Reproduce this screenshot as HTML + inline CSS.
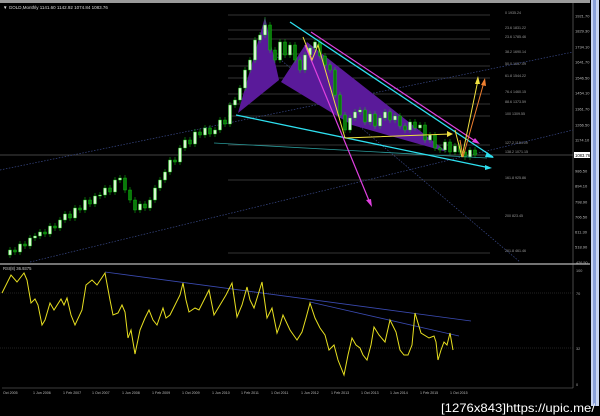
<!DOCTYPE html>
<html><head><meta charset="utf-8"><style>
html,body{margin:0;padding:0;background:#000;width:600px;height:416px;overflow:hidden}
svg{display:block}
text{font-family:"Liberation Sans",sans-serif}
.bu{fill:#d8f8d0;stroke:#1c1;stroke-width:0.4}
.be{fill:#0a7a0a;stroke:#1c1;stroke-width:0.4}
</style></head><body>
<svg width="600" height="416" viewBox="0 0 600 416" xmlns="http://www.w3.org/2000/svg">
<rect width="600" height="416" fill="#000"/>
<rect x="0" y="0" width="590" height="3" fill="#9a9a9a"/>
<rect x="591" y="0" width="8" height="406" fill="#c8d4f0"/>
<rect x="593" y="0" width="3" height="406" fill="#8aa0d8"/>
<line x1="573" y1="3" x2="573" y2="388" stroke="#777" stroke-width="0.6"/>
<line x1="0" y1="264" x2="590" y2="264" stroke="#999" stroke-width="1.5"/>
<line x1="2" y1="388" x2="573" y2="388" stroke="#777" stroke-width="0.6"/>
<text x="3" y="9" font-size="4.5" fill="#ddd">▼ GOLD,Monthly  1141.60  1142.92  1074.84  1083.76</text>
<g stroke="#666" stroke-width="0.5">
<line x1="228" y1="15" x2="490" y2="15"/><line x1="228" y1="30" x2="490" y2="30"/><line x1="228" y1="39" x2="490" y2="39"/><line x1="228" y1="54" x2="490" y2="54"/><line x1="228" y1="66" x2="490" y2="66"/><line x1="228" y1="78" x2="490" y2="78"/><line x1="228" y1="94" x2="490" y2="94"/><line x1="228" y1="104" x2="490" y2="104"/><line x1="228" y1="116" x2="490" y2="116"/><line x1="228" y1="145" x2="490" y2="145"/><line x1="228" y1="180" x2="490" y2="180"/><line x1="228" y1="218" x2="490" y2="218"/><line x1="228" y1="253" x2="490" y2="253"/>
</g>
<g font-size="3.6" fill="#999">
<text x="505" y="14">0 1935.24</text><text x="505" y="29">23.6 1831.22</text><text x="505" y="38">23.6 1785.46</text><text x="505" y="53">38.2 1690.14</text><text x="505" y="65">50.0 1637.09</text><text x="505" y="77">61.8 1544.22</text><text x="505" y="93">76.4 1460.15</text><text x="505" y="103">88.6 1373.59</text><text x="505" y="115">100 1309.55</text><text x="505" y="144">127.2 1184.09</text><text x="505" y="153">138.2 1071.15</text><text x="505" y="179">161.8 925.86</text><text x="505" y="217">200 823.45</text><text x="505" y="252">261.8 461.46</text>
</g>
<line x1="0" y1="155" x2="573" y2="155" stroke="#888" stroke-width="0.6"/>
<g stroke="#3a4a8a" stroke-width="0.7" stroke-dasharray="1.5,1.5" fill="none">
<line x1="0" y1="170" x2="573" y2="52"/>
<line x1="30" y1="262" x2="573" y2="130"/>
<line x1="275" y1="55" x2="520" y2="262"/>
</g>
<polygon points="238,113 265,17 279,80" fill="#5a1a9a"/>
<polygon points="281,82 307,42 447,152 352,125" fill="#5a1a9a"/>
<path fill="none" stroke="#1c1" stroke-width="0.5" d="M10 247V258M15 247V255M20 241V255M25 241V249M30 235V249M35 233V241M40 229V239M45 229V237M50 223V237M55 223V231M60 217V231M65 211V223M70 211V221M75 205V221M80 205V213M85 197V213M90 197V207M95 193V207M100 192V199M105 185V198M110 185V195M115 177V195M120 175V183M125 175V193M130 187V203M135 197V213M140 201V213M145 201V211M150 197V211M155 185V203M160 177V191M165 169V183M170 157V175M175 157V165M180 145V165M185 137V151M190 137V147M195 129V147M200 129V138M205 125V138M210 125V137M215 127V137M220 117V133M225 117V127M230 102V127M235 97V108M240 85V103M245 67V91M250 57V73M255 37V63M260 32V43M265 17V38M270 22V53M275 47V63M280 39V63M285 39V58M290 42V58M295 42V63M300 57V73M305 52V73M310 45V58M315 39V51M320 39V59M325 53V68M330 62V73M335 67V98M340 92V118M345 112V133M350 115V133M355 109V121M360 107V115M365 107V125M370 111V125M375 111V129M380 115V129M385 109V121M390 109V123M395 113V123M400 113V129M405 123V133M410 119V133M415 119V131M420 122V131M425 122V143M430 132V143M435 132V151M440 145V153M445 139V153M450 139V155M455 143V155M460 143V155M465 149V160M470 147V160M475 147V158"/>
<g>
<rect class="bu" x="8.5" y="250" width="3" height="5"/><rect class="be" x="13.5" y="250" width="3" height="2"/><rect class="bu" x="18.5" y="244" width="3" height="8"/><rect class="be" x="23.5" y="244" width="3" height="2"/><rect class="bu" x="28.5" y="238" width="3" height="8"/><rect class="bu" x="33.5" y="236" width="3" height="2"/><rect class="bu" x="38.5" y="232" width="3" height="4"/><rect class="be" x="43.5" y="232" width="3" height="2"/><rect class="bu" x="48.5" y="226" width="3" height="8"/><rect class="be" x="53.5" y="226" width="3" height="2"/><rect class="bu" x="58.5" y="220" width="3" height="8"/><rect class="bu" x="63.5" y="214" width="3" height="6"/><rect class="be" x="68.5" y="214" width="3" height="4"/><rect class="bu" x="73.5" y="208" width="3" height="10"/><rect class="be" x="78.5" y="208" width="3" height="2"/><rect class="bu" x="83.5" y="200" width="3" height="10"/><rect class="be" x="88.5" y="200" width="3" height="4"/><rect class="bu" x="93.5" y="196" width="3" height="8"/><rect class="bu" x="98.5" y="195" width="3" height="1"/><rect class="bu" x="103.5" y="188" width="3" height="7"/><rect class="be" x="108.5" y="188" width="3" height="4"/><rect class="bu" x="113.5" y="180" width="3" height="12"/><rect class="bu" x="118.5" y="178" width="3" height="2"/><rect class="be" x="123.5" y="178" width="3" height="12"/><rect class="be" x="128.5" y="190" width="3" height="10"/><rect class="be" x="133.5" y="200" width="3" height="10"/><rect class="bu" x="138.5" y="204" width="3" height="6"/><rect class="be" x="143.5" y="204" width="3" height="4"/><rect class="bu" x="148.5" y="200" width="3" height="8"/><rect class="bu" x="153.5" y="188" width="3" height="12"/><rect class="bu" x="158.5" y="180" width="3" height="8"/><rect class="bu" x="163.5" y="172" width="3" height="8"/><rect class="bu" x="168.5" y="160" width="3" height="12"/><rect class="be" x="173.5" y="160" width="3" height="2"/><rect class="bu" x="178.5" y="148" width="3" height="14"/><rect class="bu" x="183.5" y="140" width="3" height="8"/><rect class="be" x="188.5" y="140" width="3" height="4"/><rect class="bu" x="193.5" y="132" width="3" height="12"/><rect class="be" x="198.5" y="132" width="3" height="3"/><rect class="bu" x="203.5" y="128" width="3" height="7"/><rect class="be" x="208.5" y="128" width="3" height="6"/><rect class="bu" x="213.5" y="130" width="3" height="4"/><rect class="bu" x="218.5" y="120" width="3" height="10"/><rect class="be" x="223.5" y="120" width="3" height="4"/><rect class="bu" x="228.5" y="105" width="3" height="19"/><rect class="bu" x="233.5" y="100" width="3" height="5"/><rect class="bu" x="238.5" y="88" width="3" height="12"/><rect class="bu" x="243.5" y="70" width="3" height="18"/><rect class="bu" x="248.5" y="60" width="3" height="10"/><rect class="bu" x="253.5" y="40" width="3" height="20"/><rect class="bu" x="258.5" y="35" width="3" height="5"/><rect class="bu" x="263.5" y="25" width="3" height="10"/><rect class="be" x="268.5" y="25" width="3" height="25"/><rect class="be" x="273.5" y="50" width="3" height="10"/><rect class="bu" x="278.5" y="42" width="3" height="18"/><rect class="be" x="283.5" y="42" width="3" height="13"/><rect class="bu" x="288.5" y="45" width="3" height="10"/><rect class="be" x="293.5" y="45" width="3" height="15"/><rect class="be" x="298.5" y="60" width="3" height="10"/><rect class="bu" x="303.5" y="55" width="3" height="15"/><rect class="bu" x="308.5" y="48" width="3" height="7"/><rect class="bu" x="313.5" y="42" width="3" height="6"/><rect class="be" x="318.5" y="42" width="3" height="14"/><rect class="be" x="323.5" y="56" width="3" height="9"/><rect class="be" x="328.5" y="65" width="3" height="5"/><rect class="be" x="333.5" y="70" width="3" height="25"/><rect class="be" x="338.5" y="95" width="3" height="20"/><rect class="be" x="343.5" y="115" width="3" height="15"/><rect class="bu" x="348.5" y="118" width="3" height="12"/><rect class="bu" x="353.5" y="112" width="3" height="6"/><rect class="bu" x="358.5" y="110" width="3" height="2"/><rect class="be" x="363.5" y="110" width="3" height="12"/><rect class="bu" x="368.5" y="114" width="3" height="8"/><rect class="be" x="373.5" y="114" width="3" height="12"/><rect class="bu" x="378.5" y="118" width="3" height="8"/><rect class="bu" x="383.5" y="112" width="3" height="6"/><rect class="be" x="388.5" y="112" width="3" height="8"/><rect class="bu" x="393.5" y="116" width="3" height="4"/><rect class="be" x="398.5" y="116" width="3" height="10"/><rect class="be" x="403.5" y="126" width="3" height="4"/><rect class="bu" x="408.5" y="122" width="3" height="8"/><rect class="be" x="413.5" y="122" width="3" height="6"/><rect class="bu" x="418.5" y="125" width="3" height="3"/><rect class="be" x="423.5" y="125" width="3" height="15"/><rect class="bu" x="428.5" y="135" width="3" height="5"/><rect class="be" x="433.5" y="135" width="3" height="13"/><rect class="be" x="438.5" y="148" width="3" height="2"/><rect class="bu" x="443.5" y="142" width="3" height="8"/><rect class="be" x="448.5" y="142" width="3" height="10"/><rect class="bu" x="453.5" y="146" width="3" height="6"/><rect class="be" x="458.5" y="146" width="3" height="6"/><rect class="be" x="463.5" y="152" width="3" height="5"/><rect class="bu" x="468.5" y="150" width="3" height="7"/><rect class="be" x="473.5" y="150" width="3" height="5"/>
</g>
<line x1="214" y1="143" x2="487" y2="158" stroke="#2a9a9a" stroke-width="0.8"/>
<line x1="290" y1="22" x2="493" y2="157" stroke="#2ee0f0" stroke-width="1.3"/>
<line x1="236" y1="115" x2="490" y2="168" stroke="#2ee0f0" stroke-width="1.3"/>
<line x1="311" y1="32" x2="478" y2="143" stroke="#e040e0" stroke-width="1.2"/>
<line x1="305" y1="45" x2="370" y2="203" stroke="#e040e0" stroke-width="1.2"/>
<polyline points="303,37 312,60 318,45 345,138 450,134" fill="none" stroke="#f0e040" stroke-width="1"/>
<polyline points="455,130 462,157 478,80" fill="none" stroke="#f0e040" stroke-width="1"/>
<polyline points="460,140 463,157 484,82" fill="none" stroke="#f08030" stroke-width="1"/>
<g fill="#f0e040"><polygon points="478,76 475,84 480,84"/><polygon points="453,134 447,131 447,137"/></g>
<polygon points="485,78 481,85 486,86" fill="#f08030"/>
<polygon points="372,207 366,200 371,199" fill="#e040e0"/>
<polygon points="480,144 472,142 475,138" fill="#e040e0"/>
<polygon points="494,158 487,152 485,157" fill="#2ee0f0"/>
<polygon points="492,168 485,165 485,170" fill="#2ee0f0"/>
<g font-size="4" fill="#bbb">
<text x="575" y="17.5">1921.70</text><text x="575" y="32.5">1829.30</text><text x="575" y="48.5">1734.10</text><text x="575" y="63.5">1641.70</text><text x="575" y="79.5">1546.50</text><text x="575" y="94.5">1454.10</text><text x="575" y="110.5">1361.70</text><text x="575" y="126.5">1266.50</text><text x="575" y="141.5">1174.10</text><text x="575" y="172.5">986.50</text><text x="575" y="187.5">894.10</text><text x="575" y="203.5">798.90</text><text x="575" y="218.5">706.50</text><text x="575" y="233.5">611.30</text><text x="575" y="248.5">518.90</text>
</g>
<rect x="574" y="152" width="16" height="6" fill="#fff"/>
<text x="575" y="157" font-size="4.2" fill="#000">1083.76</text>
<text x="3" y="270" font-size="4.2" fill="#ccc">RSI(8) 36.9375</text>
<g stroke="#444" stroke-width="0.5" stroke-dasharray="1,1"><line x1="0" y1="293" x2="573" y2="293"/><line x1="0" y1="348" x2="573" y2="348"/></g>
<g font-size="3.8" fill="#aaa"><text x="576" y="272">100</text><text x="576" y="295">70</text><text x="576" y="350">32</text><text x="576" y="386">0</text><text x="576" y="264">426.50</text></g>
<line x1="105" y1="272" x2="471" y2="321" stroke="#3a4ab0" stroke-width="0.8"/>
<line x1="310" y1="302" x2="459" y2="336" stroke="#3a4ab0" stroke-width="0.8"/>
<polyline fill="none" stroke="#e8e020" stroke-width="1" points="2,293 11,275 17,282 24,273 27,280 31,303 35,299 38,305 42,325 45,320 50,303 54,310 61,299 64,305 67,298 71,315 75,325 82,310 86,285 92,280 97,285 105,273 110,300 113,315 118,313 122,305 125,312 128,338 131,330 135,354 140,330 145,318 149,310 153,320 157,325 163,308 166,318 170,315 175,305 180,295 183,283 186,300 189,312 195,308 199,310 204,300 209,290 214,315 220,305 226,295 232,283 237,317 242,305 247,287 250,300 254,308 258,295 262,282 267,318 272,308 277,333 280,325 283,315 290,330 297,340 302,332 306,318 310,303 315,318 320,328 325,335 329,350 334,345 338,360 344,375 348,355 352,338 356,345 360,348 363,355 367,360 371,345 374,327 379,335 385,342 390,320 396,332 400,350 404,355 408,355 412,345 415,313 421,333 429,338 434,336 436,342 438,360 441,350 444,342 447,345 450,333 453,350"/>
<g font-size="3.6" fill="#bbb">
<text x="3" y="394">Oct 2005</text><text x="33" y="394">1 Jun 2006</text><text x="63" y="394">1 Feb 2007</text><text x="92" y="394">1 Oct 2007</text><text x="122" y="394">1 Jun 2008</text><text x="152" y="394">1 Feb 2009</text><text x="182" y="394">1 Oct 2009</text><text x="212" y="394">1 Jun 2010</text><text x="241" y="394">1 Feb 2011</text><text x="271" y="394">1 Oct 2011</text><text x="301" y="394">1 Jun 2012</text><text x="331" y="394">1 Feb 2013</text><text x="361" y="394">1 Oct 2013</text><text x="390" y="394">1 Jun 2014</text><text x="420" y="394">1 Feb 2015</text><text x="450" y="394">1 Oct 2015</text>
</g>
<text x="441" y="412" font-size="12" fill="#fff" font-family="Liberation Mono, monospace" textLength="154" lengthAdjust="spacingAndGlyphs">[1276x843]https://upic.me/</text>
</svg>
</body></html>
